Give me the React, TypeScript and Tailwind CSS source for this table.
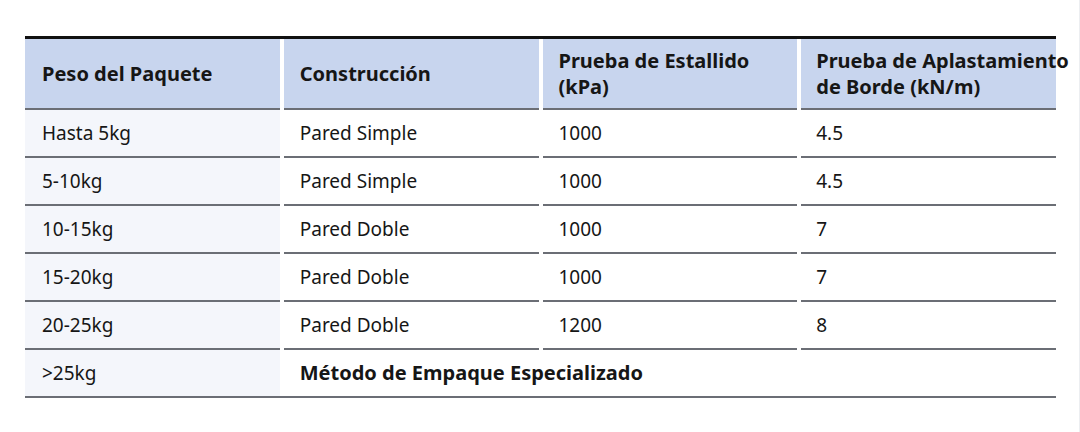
import React from "react";

const rows = [
  ["Hasta 5kg", "Pared Simple", "1000", "4.5"],
  ["5-10kg", "Pared Simple", "1000", "4.5"],
  ["10-15kg", "Pared Doble", "1000", "7"],
  ["15-20kg", "Pared Doble", "1000", "7"],
  ["20-25kg", "Pared Doble", "1200", "8"],
];

export default function App() {
  return (
    <div
      className="w-[1080px] h-[432px] bg-white text-[#161616] pt-[36px] pl-[25px] border-r border-[#eceef1]"
      style={{ fontFamily: '"Noto Sans", Roboto, sans-serif' }}
    >
      <div className="w-[1031px] border-t-[3px] border-[#111]">
        {/* header */}
        <div className="grid grid-cols-4 gap-x-[4px] text-[20px] font-bold leading-[26px]">
          <div className="h-[71px] bg-[#c8d5ee] border-b-2 border-[#6b6e75] pl-[17px] flex items-center">
            Peso del Paquete
          </div>
          <div className="h-[71px] bg-[#c8d5ee] border-b-2 border-[#6b6e75] pl-[16px] flex items-center">
            Construcción
          </div>
          <div className="h-[71px] bg-[#c8d5ee] border-b-2 border-[#6b6e75] pl-[16px] flex items-center">
            <span>
              Prueba de Estallido
              <br />
              (kPa)
            </span>
          </div>
          <div className="h-[71px] bg-[#c8d5ee] border-b-2 border-[#6b6e75] pl-[15px] flex items-center whitespace-nowrap">
            <span>
              Prueba de Aplastamiento
              <br />
              de Borde (kN/m)
            </span>
          </div>
        </div>

        {/* body */}
        {rows.map((r) => (
          <div key={r[0]} className="grid grid-cols-4 gap-x-[4px] text-[19px]">
            <div className="h-[48px] bg-[#f4f6fb] border-b-2 border-[#6b6e75] pl-[17px] flex items-center">
              {r[0]}
            </div>
            <div className="h-[48px] border-b-2 border-[#6b6e75] pl-[16px] flex items-center">
              {r[1]}
            </div>
            <div className="h-[48px] border-b-2 border-[#6b6e75] pl-[16px] flex items-center">
              {r[2]}
            </div>
            <div className="h-[48px] border-b-2 border-[#6b6e75] pl-[15px] flex items-center">
              {r[3]}
            </div>
          </div>
        ))}

        <div className="grid grid-cols-4 gap-x-[4px] border-b-2 border-[#6b6e75]">
          <div className="h-[46px] bg-[#f4f6fb] pl-[17px] flex items-center text-[19px]">
            &gt;25kg
          </div>
          <div className="col-span-3 h-[46px] pl-[16px] flex items-center text-[20px] font-bold">
            Método de Empaque Especializado
          </div>
        </div>
      </div>
    </div>
  );
}
